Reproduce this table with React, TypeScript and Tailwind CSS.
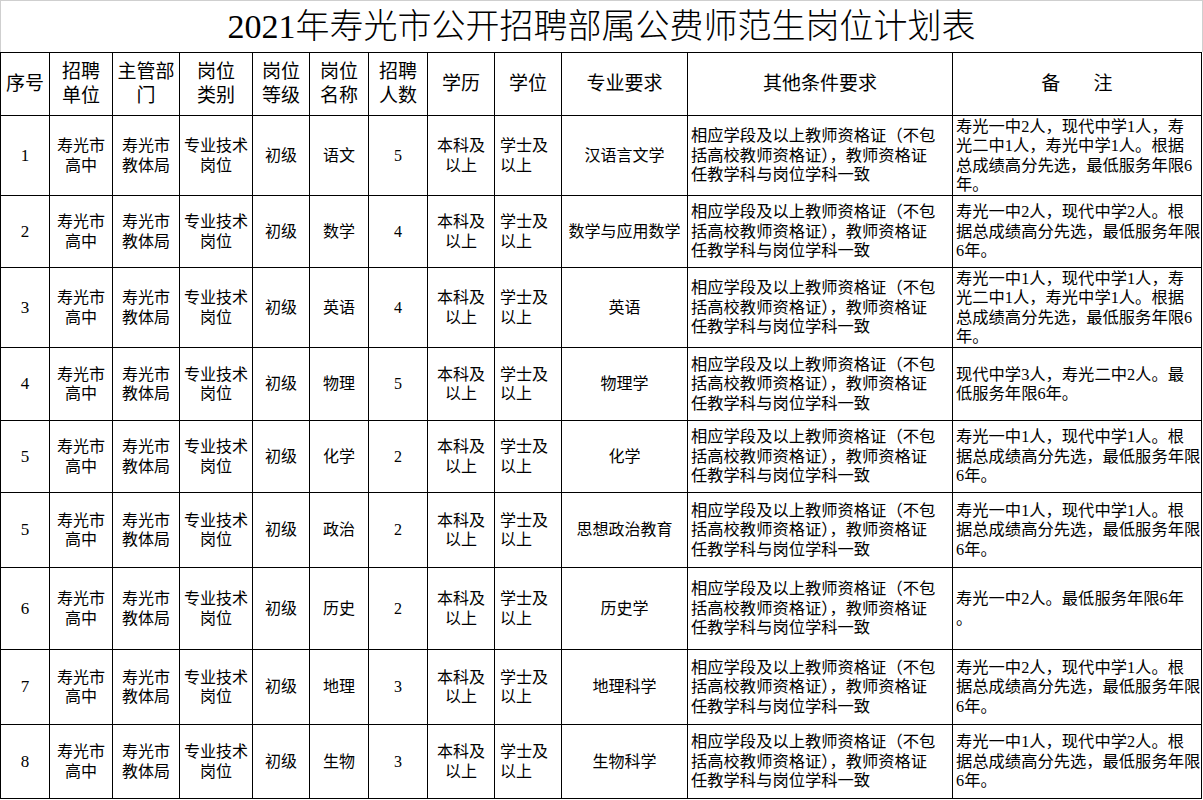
import React from 'react';

type Row = {
  n: string;
  name: string;
  cnt: string;
  major: string;
  note: string[];
  h: string;
};

const rows: Row[] = [
  { n: '1', name: '语文', cnt: '5', major: '汉语言文学', note: ['寿光一中2人，现代中学1人，寿', '光二中1人，寿光中学1人。根据', '总成绩高分先选，最低服务年限6', '年。'], h: 'h-[80px]' },
  { n: '2', name: '数学', cnt: '4', major: '数学与应用数学', note: ['寿光一中2人，现代中学2人。根', '据总成绩高分先选，最低服务年限', '6年。'], h: 'h-[72px]' },
  { n: '3', name: '英语', cnt: '4', major: '英语', note: ['寿光一中1人，现代中学1人，寿', '光二中1人，寿光中学1人。根据', '总成绩高分先选，最低服务年限6', '年。'], h: 'h-[80px]' },
  { n: '4', name: '物理', cnt: '5', major: '物理学', note: ['现代中学3人，寿光二中2人。最', '低服务年限6年。'], h: 'h-[73px]' },
  { n: '5', name: '化学', cnt: '2', major: '化学', note: ['寿光一中1人，现代中学1人。根', '据总成绩高分先选，最低服务年限', '6年。'], h: 'h-[72px]' },
  { n: '5', name: '政治', cnt: '2', major: '思想政治教育', note: ['寿光一中1人，现代中学1人。根', '据总成绩高分先选，最低服务年限', '6年。'], h: 'h-[75px]' },
  { n: '6', name: '历史', cnt: '2', major: '历史学', note: ['寿光一中2人。最低服务年限6年', '。'], h: 'h-[82px]' },
  { n: '7', name: '地理', cnt: '3', major: '地理科学', note: ['寿光一中2人，现代中学1人。根', '据总成绩高分先选，最低服务年限', '6年。'], h: 'h-[75px]' },
  { n: '8', name: '生物', cnt: '3', major: '生物科学', note: ['寿光一中1人，现代中学2人。根', '据总成绩高分先选，最低服务年限', '6年。'], h: 'h-[74px]' },
];

const other = ['相应学段及以上教师资格证（不包', '括高校教师资格证），教师资格证', '任教学科与岗位学科一致'];

function Lines({ lines }: { lines: string[] }) {
  return (
    <>
      {lines.map((l, i) => (
        <React.Fragment key={i}>
          {l}
          {i < lines.length - 1 && <br />}
        </React.Fragment>
      ))}
    </>
  );
}

const td = 'border border-black p-0 align-middle whitespace-nowrap';
const th = 'border border-black p-0 align-middle font-normal whitespace-nowrap text-center';

export default function App() {
  return (
    <div
      className="w-[1203px] h-[800px] overflow-hidden bg-white text-black"
      style={{ fontFamily: '"Liberation Serif", "Noto Sans CJK SC", serif' }}
    >
      <div className="h-[52px] border-t border-l border-r border-[#cfcfcf] flex items-center justify-center">
        <span className="text-[34px] leading-none font-light">2021年寿光市公开招聘部属公费师范生岗位计划表</span>
      </div>
      <table className="w-[1202px] table-fixed border-collapse">
        <colgroup>
          <col className="w-[49px]" />
          <col className="w-[63px]" />
          <col className="w-[67px]" />
          <col className="w-[73px]" />
          <col className="w-[57px]" />
          <col className="w-[59px]" />
          <col className="w-[59px]" />
          <col className="w-[67px]" />
          <col className="w-[67px]" />
          <col className="w-[126px]" />
          <col className="w-[265px]" />
          <col className="w-[249px]" />
        </colgroup>
        <thead>
          <tr className="h-[63px] text-[19px] leading-[24px]">
            <th className={th}>序号</th>
            <th className={th}>招聘<br />单位</th>
            <th className={th}>主管部<br />门</th>
            <th className={th}>岗位<br />类别</th>
            <th className={th}>岗位<br />等级</th>
            <th className={th}>岗位<br />名称</th>
            <th className={th}>招聘<br />人数</th>
            <th className={th}>学历</th>
            <th className={th}>学位</th>
            <th className={th}>专业要求</th>
            <th className={th}>其他条件要求</th>
            <th className={th}>备&nbsp;&nbsp;&nbsp;&nbsp;&nbsp;&nbsp;&nbsp;注</th>
          </tr>
        </thead>
        <tbody className="text-[16px] leading-[19.5px]">
          {rows.map((r, i) => (
            <tr key={i} className={r.h}>
              <td className={`${td} text-center text-[17px]`}>{r.n}</td>
              <td className={`${td} text-center`}>寿光市<br />高中</td>
              <td className={`${td} text-center`}>寿光市<br />教体局</td>
              <td className={`${td} text-center`}>专业技术<br />岗位</td>
              <td className={`${td} text-center`}>初级</td>
              <td className={`${td} text-center`}>{r.name}</td>
              <td className={`${td} text-center`}>{r.cnt}</td>
              <td className={`${td} text-center`}>本科及<br />以上</td>
              <td className={`${td} text-left pl-[5px]`}>学士及<br />以上</td>
              <td className={`${td} text-center`}>{r.major}</td>
              <td className={`${td} text-left pl-[3px] text-[16.3px]`}><Lines lines={other} /></td>
              <td className={`${td} text-left pl-[3px] text-[16.3px]`}><Lines lines={r.note} /></td>
            </tr>
          ))}
        </tbody>
      </table>
    </div>
  );
}
